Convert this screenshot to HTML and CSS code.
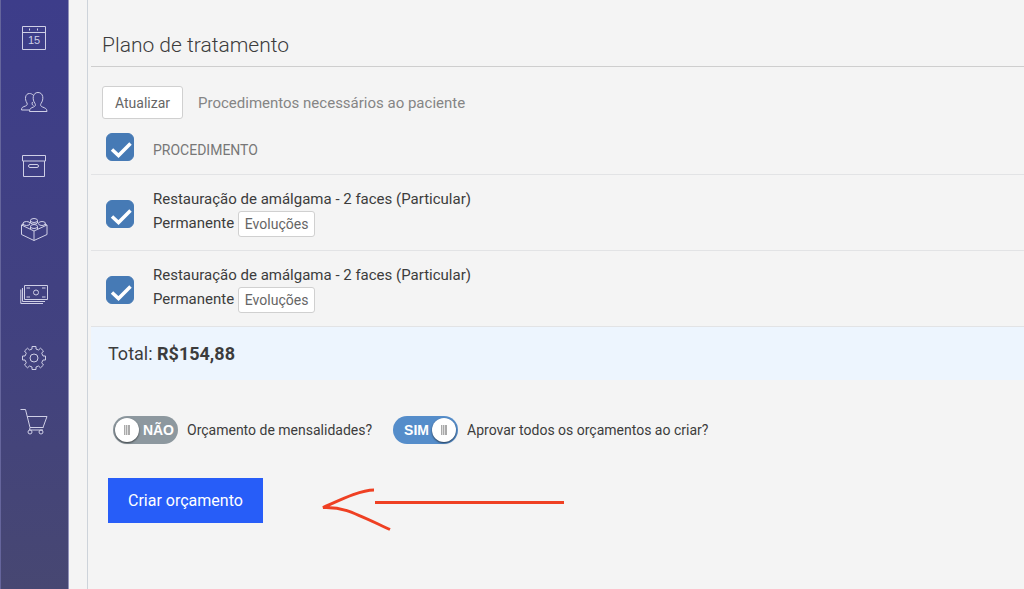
FILE: index.html
```html
<!DOCTYPE html>
<html lang="pt-BR">
<head>
  <meta charset="UTF-8" />
  <title>Plano de tratamento</title>
  <meta name="viewport" content="width=device-width, initial-scale=1.0" />
  <link rel="stylesheet" href="styles.css">
</head>
<body>

  <nav class="sidebar">
    <a href="#agenda" aria-label="Agenda">
      <svg viewBox="0 0 28 28">
        <path d="M2.5 2.5h23v23h-23zM2.5 8.500h23" />
        <path d="M9.500 4.500v2M17.500 4.500v2" />
        <text x="14" y="20">15</text>
      </svg>
    </a>
    <a href="#pacientes" aria-label="Pacientes">
      <svg viewBox="0 0 28 28">
        <path d="M9.500 23.500c0-3 1.500-3.500 4-4.500 2-.8 2.300-2 1.500-3.500-3-4-2.500-11 3-11s6 7 3 11c-.8 1.500-.5 2.700 1.500 3.500 2.500 1 4.500 1.500 4.500 4.500z" />
        <path d="M13 7c-1-1-2-1.500-3.500-1.500-4.500 0-5 6-2.500 9.500.5 1.500 0 2.500-1.500 3-2.500 1-4 1-4 4h8M12.500 14c-.8 1.500-.5 3 1 3.500" />
      </svg>
    </a>
    <a href="#arquivo" aria-label="Arquivo">
      <svg viewBox="0 0 28 28">
        <path d="M2.500 3.500h23v5.500h-23zM3.500 9v15.500h21V9" />
        <rect x="8.500" y="12.500" width="10" height="3" rx="1.500" />
      </svg>
    </a>
    <a href="#procedimentos" aria-label="Procedimentos">
      <svg viewBox="0 0 28 28">
        <path d="M4 8L1.500 9v9.500l12.500 6 13-6V9L24 8M1.500 9L14 15l13-6M14 15v9.500" />
        <ellipse cx="14" cy="4.500" rx="3.500" ry="2" />
        <ellipse cx="6.500" cy="7.500" rx="3.500" ry="2" />
        <ellipse cx="22" cy="7.500" rx="3.500" ry="2" />
        <ellipse cx="14" cy="10.500" rx="3.500" ry="2" />
        <path d="M10.500 4.500v2.500c2 1.500 5 1.500 7 0V4.500M3 7.500v2M25.500 7.500v2M10.500 10.500v2.500M17.500 10.500v2.500" />
      </svg>
    </a>
    <a href="#financeiro" aria-label="Financeiro">
      <svg viewBox="0 0 28 28">
        <path d="M4.500 5.500h23v14h-23zM2.500 8v13.500H25M.8 9.500v14H23" />
        <path d="M6.500 8H10M22 8h3.500M6.500 17H10M22 17h3.500" />
        <circle cx="16" cy="12.500" r="2.500" />
      </svg>
    </a>
    <a href="#configuracoes" aria-label="Configurações">
      <svg viewBox="0 0 28 28">
        <path d="M12 5V2.500h4V5l2.500 1 2-1.800L23.500 7l-1.800 2.200L23 12h2.500v4H23l-1.300 2.800 1.800 2.200-3 2.800-2-1.800-2.500 1v2.500h-4V23l-2.500-1-2 1.800-3-2.800 1.800-2.200L5 16H2.500v-4H5l1.300-2.800L4.500 7l3-2.800 2 1.800z" />
        <circle cx="14" cy="14" r="4" />
      </svg>
    </a>
    <a href="#loja" aria-label="Loja">
      <svg viewBox="0 0 28 28">
        <path d="M.5 1.500h5L10 19.500h13.500M7 8.500h20l-4 11M10 19.500l-.5 2.500H23" />
        <circle cx="10" cy="24" r="2" />
        <circle cx="21" cy="24" r="2" />
      </svg>
    </a>
  </nav>

  <main class="panel">
    <h1>Plano de tratamento</h1>

    <div class="toolbar">
      <button type="button" class="btn">Atualizar</button>
      <span>Procedimentos necessários ao paciente</span>
    </div>

    <table class="procedures">
      <thead>
        <tr>
          <th class="check"><input type="checkbox" aria-label="Selecionar todos" checked></th>
          <th>PROCEDIMENTO</th>
        </tr>
      </thead>
      <tbody>
        <tr>
          <td class="check"><input type="checkbox" aria-label="Selecionar procedimento 1" checked></td>
          <td>Restauração de amálgama - 2 faces (Particular)<br>Permanente <button type="button" class="btn btn-small">Evoluções</button></td>
        </tr>
        <tr>
          <td class="check"><input type="checkbox" aria-label="Selecionar procedimento 2" checked></td>
          <td>Restauração de amálgama - 2 faces (Particular)<br>Permanente <button type="button" class="btn btn-small">Evoluções</button></td>
        </tr>
      </tbody>
    </table>

    <div class="total">Total: <strong>R$154,88</strong></div>

    <div class="options">
      <label class="option">
        <input type="checkbox">
        <span class="switch"><span class="on">SIM</span><span class="knob"></span><span class="off">NÃO</span></span>
        Orçamento de mensalidades?
      </label>
      <label class="option">
        <input type="checkbox" checked>
        <span class="switch"><span class="on">SIM</span><span class="knob"></span><span class="off">NÃO</span></span>
        Aprovar todos os orçamentos ao criar?
      </label>
    </div>

    <div class="actions">
      <button type="button" class="btn-create">Criar orçamento</button>
      <svg class="arrow" viewBox="0 0 244 44" aria-hidden="true">
        <path d="M54 3C40 3 20 13 3 20.500c20-1 30 5 67 22M55 15.500h189" />
      </svg>
    </div>
  </main>

</body>
</html>
```
FILE: styles.css
```css
* {
  box-sizing: border-box;
}

body {
  display: flex;
  min-height: 100vh;
  margin: 0;
  background: #f4f4f4;
  color: #3c3c3c;
  font-family: Roboto, "Liberation Sans", sans-serif;
  font-size: 15px;
}

button {
  font-family: inherit;
  cursor: pointer;
}

/* Sidebar */
.sidebar {
  display: flex;
  flex-direction: column;
  flex: none;
  gap: 36px;
  width: 69px;
  padding: 24px 19px 0;
  background: linear-gradient(#3d3d8a, #42427f 60%, #474772);
  border-left: 1px solid #65659c;
  border-right: 1px solid #9292b9;
}

.sidebar a {
  height: 28px;
}

.sidebar svg {
  display: block;
  width: 28px;
  height: 28px;
  fill: none;
  stroke: #cfcfe6;
  stroke-width: 1;
}

.sidebar text {
  fill: #cfcfe6;
  stroke: none;
  font-family: "Liberation Sans", Arial, sans-serif;
  font-size: 11px;
  text-anchor: middle;
}

/* Content */
.panel {
  flex: 1;
  margin-left: 18px;
  padding-left: 3px;
  border-left: 1px solid #cdd3da;
}

h1 {
  margin: 0;
  padding: 32px 11px 8px;
  border-bottom: 1px solid #cecece;
  font-size: 21px;
  font-weight: 300;
  line-height: 26px;
}

.toolbar {
  display: flex;
  align-items: center;
  gap: 15px;
  padding: 19px 11px 0;
  color: #858585;
}

.btn {
  height: 33px;
  padding: 0 12px;
  background: #fff;
  border: 1px solid #d0d0d0;
  border-radius: 3px;
  color: #666;
  font-size: 14px;
}

.btn-small {
  height: 26px;
  padding: 0 6px;
  vertical-align: middle;
}

.procedures {
  width: 100%;
  border-collapse: collapse;
}

.procedures th,
.procedures td {
  height: 76px;
  padding: 0;
  border-bottom: 1px solid #e2e3e5;
  line-height: 23px;
  text-align: left;
}

.procedures th {
  height: 55px;
  padding-top: 8px;
  color: #777;
  font-size: 14px;
  font-weight: 400;
}

.procedures .check {
  width: 62px;
  padding: 4px 0 0 15px;
}

.procedures th.check {
  padding-top: 1px;
}

.check input {
  display: block;
  appearance: none;
  width: 28px;
  height: 28px;
  margin: 0;
  border: 1px solid #467ab5;
  border-radius: 6px;
}

.check input:checked {
  background: #467ab5 url("data:image/svg+xml,%3Csvg xmlns='http://www.w3.org/2000/svg' viewBox='0 0 26 26'%3E%3Cpath d='M5 15.500l6.500 6L23.500 9.500' fill='none' stroke='white' stroke-width='3.500'/%3E%3C/svg%3E") center;
}

.total {
  padding: 13px 17px;
  background: #edf5fe;
  font-size: 18px;
  line-height: 27px;
}

/* Yes/no switches */
.options {
  display: flex;
  flex-wrap: wrap;
  gap: 21px;
  padding: 36px 22px 0;
}

.option {
  display: flex;
  align-items: center;
  gap: 9px;
  font-size: 14px;
  cursor: pointer;
}

.option input {
  position: absolute;
  opacity: 0;
}

.switch {
  display: flex;
  align-items: center;
  justify-content: space-between;
  width: 65px;
  height: 28px;
  padding: 0 4px 0 2px;
  background: #8d989f;
  border-radius: 14px;
  color: #fff;
  font-family: "Liberation Sans", Arial, sans-serif;
  font-weight: 700;
}

.on {
  display: none;
}

.knob {
  width: 24px;
  height: 24px;
  background: linear-gradient(90deg, #aaa 1px, #ddd 1px 2px, #aaa 2px 3px, #ddd 3px 4px, #aaa 4px) center / 6px 10px no-repeat #fff;
  border-radius: 50%;
  box-shadow: 0 1px 2px rgba(0, 0, 0, 0.6);
}

input:checked + .switch {
  padding: 0 2px 0 11px;
  background: #558dca;
}

input:checked + .switch .on {
  display: inline;
}

input:checked + .switch .off {
  display: none;
}

.actions {
  display: flex;
  align-items: flex-start;
  gap: 57px;
  padding: 34px 17px;
}

.btn-create {
  height: 45px;
  padding: 0 20px;
  background: #275df8;
  border: 0;
  color: #fff;
  font-size: 16px;
}

.arrow {
  width: 244px;
  height: 44px;
  margin-top: 9px;
  fill: none;
  stroke: #ef4023;
  stroke-width: 3;
}
```
